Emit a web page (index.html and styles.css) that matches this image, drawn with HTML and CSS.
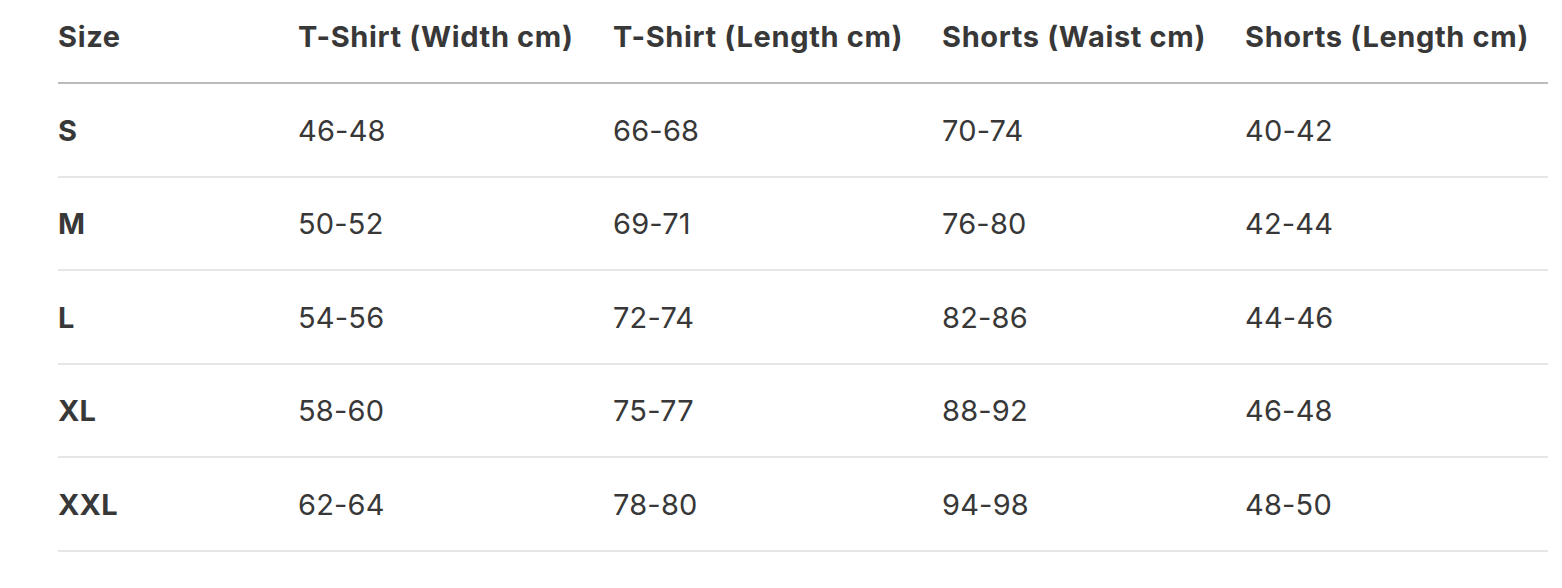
FILE: index.html
```html
<!DOCTYPE html>
<html lang="en">
<head>
<meta charset="utf-8">
<title>Size Chart</title>
<link rel="stylesheet" href="styles.css">
</head>
<body>
<div class="wrap">
<table class="size-table">
  <colgroup>
    <col class="c-size">
    <col class="c-tw">
    <col class="c-tl">
    <col class="c-sw">
    <col class="c-sl">
  </colgroup>
  <thead>
    <tr><th>Size</th><th>T-Shirt (Width cm)</th><th>T-Shirt (Length cm)</th><th>Shorts (Waist cm)</th><th>Shorts (Length cm)</th></tr>
  </thead>
  <tbody>
    <tr><td class="sz">S</td><td>46-48</td><td>66-68</td><td>70-74</td><td>40-42</td></tr>
    <tr><td class="sz">M</td><td>50-52</td><td>69-71</td><td>76-80</td><td>42-44</td></tr>
    <tr><td class="sz">L</td><td>54-56</td><td>72-74</td><td>82-86</td><td>44-46</td></tr>
    <tr><td class="sz">XL</td><td>58-60</td><td>75-77</td><td>88-92</td><td>46-48</td></tr>
    <tr><td class="sz">XXL</td><td>62-64</td><td>78-80</td><td>94-98</td><td>48-50</td></tr>
  </tbody>
</table>
</div>
</body>
</html>
```
FILE: styles.css
```css
html, body {
  margin: 0;
  padding: 0;
  background: #ffffff;
}
.wrap {
  padding: 0 14px 0 58px;
}
.size-table {
  width: 1490px;
  border-collapse: collapse;
  table-layout: fixed;
  font-family: Inter, "Liberation Sans", sans-serif;
  color: #383838;
  font-size: 29px;
}
.c-size { width: 240px; }
.c-tw { width: 315px; }
.c-tl { width: 329px; }
.c-sw { width: 303px; }
.c-sl { width: 303px; }
th {
  text-align: left;
  font-weight: 700;
  font-size: 29px;
  letter-spacing: 0.65px;
  padding: 20px 0 29px 0;
  line-height: 33px;
  border-bottom: 2px solid #bcbcbc;
  white-space: nowrap;
}
td {
  padding: 29.5px 0 29px 0;
  line-height: 33px;
  border-bottom: 2px solid #e6e6e6;
  letter-spacing: 0.2px;
}
td.sz {
  font-weight: 700;
}
```
